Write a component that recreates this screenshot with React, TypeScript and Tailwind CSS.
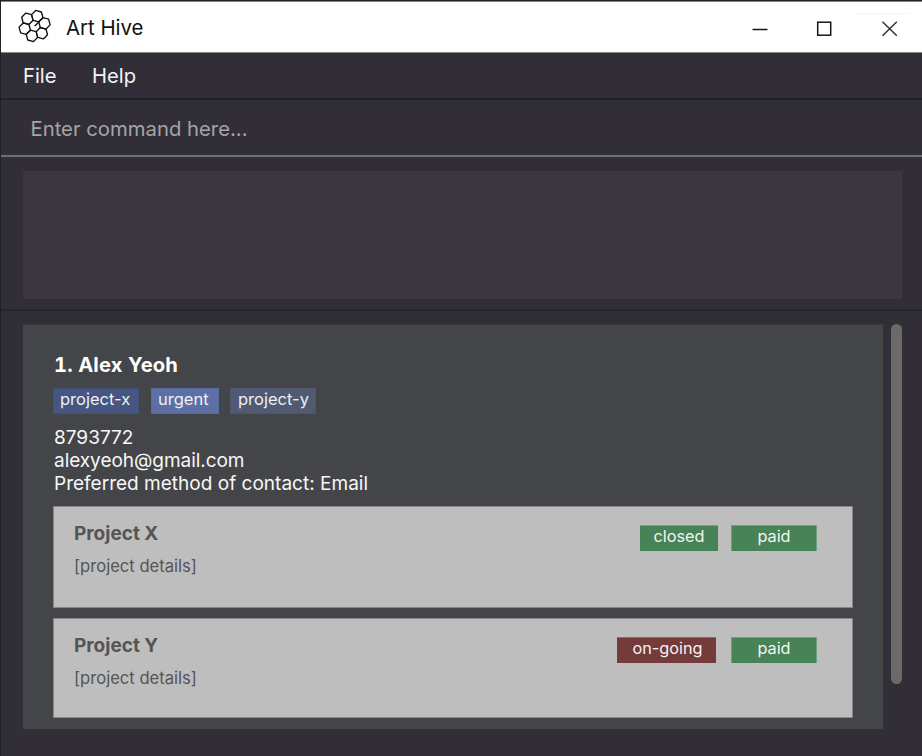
const CX = 34.6;
const CY = 26;

function hexPoints(x: number, y: number) {
  return Array.from({ length: 6 }, (_, k) => {
    const a = ((15 + 60 * k) * Math.PI) / 180;
    return `${(x + 5.9 * Math.cos(a)).toFixed(2)},${(y + 5.9 * Math.sin(a)).toFixed(2)}`;
  }).join(' ');
}

function HiveLogo() {
  const cells = [0, 1, 2, 3, 4, 5].map((k) => {
    const a = ((-15 + 60 * k) * Math.PI) / 180;
    return [CX + 10.2 * Math.cos(a), CY + 10.2 * Math.sin(a)];
  });
  return (
    <svg width="40" height="40" viewBox="14 7 40 40" fill="none" stroke="#111" strokeWidth="1.35" strokeLinejoin="round">
      {cells.map(([x, y], i) => (
        <polygon key={i} points={hexPoints(x, y)} />
      ))}
      <path d="M34.7 26.1 39.4 21.4" />
    </svg>
  );
}

function Project({ name, height, status, statusClass }: { name: string; height: string; status: string; statusClass: string }) {
  return (
    <section className={`${height} flex items-start justify-between border border-[#87878a] bg-[#bebebe] pl-5 pr-[35px]`}>
      <div className="text-[#555]">
        <h3 className="mt-[14px] text-[19px] leading-[26px] font-bold">{name}</h3>
        <p className="mt-[7px] text-[16.6px] leading-[24px]">[project details]</p>
      </div>
      <div className="mt-[18px] flex text-[16.3px] leading-[21px] text-[#f2f5f2]">
        <span className={`h-[26px] border-t border-white/25 ${statusClass}`}>{status}</span>
        <span className="h-[26px] w-[86px] border border-b-0 border-[#6fa080] bg-[#488358] text-center">paid</span>
      </div>
    </section>
  );
}

export default function App() {
  return (
    <main className="flex h-[756px] w-[922px] flex-col overflow-hidden border-t border-l border-[#202024] bg-[#312e38] font-['Inter',sans-serif]">
      <header className="flex h-[52px] shrink-0 items-center border-y border-[#858585] bg-white pl-[13px]">
        <HiveLogo />
        <h1 className="ml-[12px] pt-[2px] text-[20.4px] leading-[26px] text-[#111]">Art Hive</h1>
        <svg className="ml-auto" width="172" height="48" viewBox="750 3 172 48" fill="none" stroke="#151515" strokeWidth="1.5">
          <path d="M752.5 29.5H767.5" />
          <rect x="817.7" y="22.2" width="13" height="13" />
          <path d="M882.5 21.8 896.8 35.8M896.8 21.8 882.5 35.8" stroke="#333" />
          <path d="M857 13.5H909" stroke="#f1f5fc" strokeWidth="1" />
        </svg>
      </header>
      <nav className="flex h-[47px] shrink-0 items-center border-b-2 border-[#212024] pt-[2px] pl-[22px] text-[20.2px] text-[#f4f4f4]">
        <span className="w-[69px]">File</span>
        <span>Help</span>
      </nav>
      <div className="flex h-[57px] shrink-0 items-center border-b-2 border-[#706f70] pt-[4px] pl-[29.5px] text-[20.3px] text-[#a5a4a7]">
        Enter command here...
      </div>
      <div className="flex h-[154px] shrink-0 border-b-2 border-[#252428] pt-[14px] pr-[20px] pb-[10px] pl-[22px]">
        <div className="flex-1 bg-[#3a3741]" />
      </div>
      <div className="flex pt-[13px] pl-[22px]">
        <article className="h-[405px] w-[860px] border-t border-[#3b3a40] bg-[#444549] px-[30px] pt-[27px] text-white">
          <h2 className="pl-px text-[20.2px] leading-[26px] font-bold tracking-[0.1px] tabular-nums">1. Alex Yeoh</h2>
          <div className="mt-[10px] flex text-[16.5px] leading-[20px] text-[#eef0f5]">
            <span className="mr-[12px] h-[26px] w-[86px] border border-[#435079] bg-[#475680] pl-[6px]">project-x</span>
            <span className="mr-[11px] h-[26px] w-[68px] border border-[#576ba1] bg-[#5d70a5] pl-[6px]">urgent</span>
            <span className="h-[26px] w-[86px] border border-[#4c5571] bg-[#515a73] pl-[7px]">project-y</span>
          </div>
          <div className="mt-[12px] pl-px text-[19.05px] leading-[23px] text-[#f7f7f7]">
            <p>8793772</p>
            <p className="tracking-[-0.06px]">alexyeoh@gmail.com</p>
            <p>Preferred method of contact: Email</p>
          </div>
          <div className="mt-[11px] flex flex-col gap-[10px]">
            <Project name="Project X" height="h-[102px]" status="closed" statusClass="mr-[13px] w-[78px] bg-[#488358] text-center" />
            <Project name="Project Y" height="h-[100px]" status="on-going" statusClass="mr-[15px] w-[99px] bg-[#753a3a] pl-[2px] text-center" />
          </div>
        </article>
        <div className="ml-[7.5px] h-[359.5px] w-[11.5px] rounded-full bg-[#6b6a68]" />
      </div>
    </main>
  );
}
